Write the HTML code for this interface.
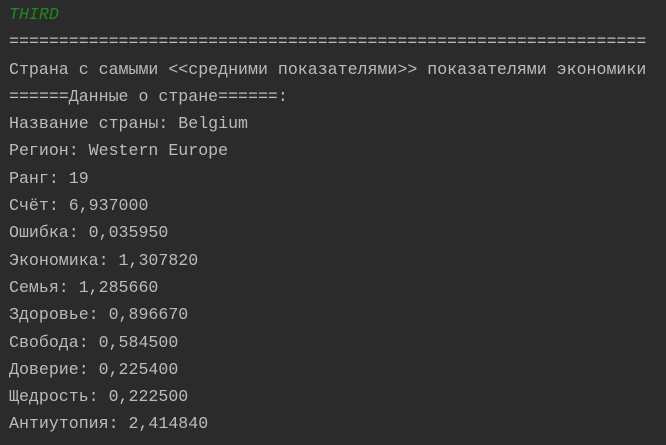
<!DOCTYPE html>
<html><head><meta charset="utf-8"><style>
html,body{margin:0;padding:0;background:#2b2b2b;width:666px;height:445px;overflow:hidden}
pre{margin:0;position:absolute;left:9px;top:1px;font-family:"Liberation Mono","DejaVu Sans Mono",monospace;font-size:16.6px;line-height:27.3px;color:#bbbbbb;white-space:pre}
.g{color:#1e8a1e;font-style:italic}
</style></head><body>
<pre><span class="g">THIRD</span>
================================================================
Страна с самыми &lt;&lt;средними показателями&gt;&gt; показателями экономики
======Данные о стране======:
Название страны: Belgium
Регион: Western Europe
Ранг: 19
Счёт: 6,937000
Ошибка: 0,035950
Экономика: 1,307820
Семья: 1,285660
Здоровье: 0,896670
Свобода: 0,584500
Доверие: 0,225400
Щедрость: 0,222500
Антиутопия: 2,414840</pre>
</body></html>
